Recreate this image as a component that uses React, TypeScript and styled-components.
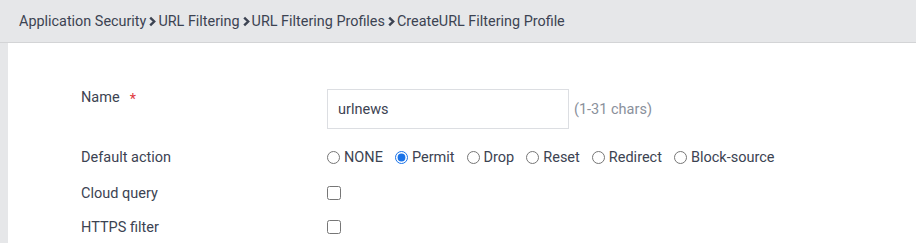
import React from 'react';
import styled, { createGlobalStyle } from 'styled-components';

const GlobalStyle = createGlobalStyle`
  html, body {
    margin: 0;
    padding: 0;
    background: #ffffff;
    font-family: Roboto, "Liberation Sans", sans-serif;
  }
`;

const Page = styled.div`
  width: 916px;
  height: 243px;
  display: flex;
  flex-direction: column;
  overflow: hidden;
`;

const Header = styled.div`
  height: 42px;
  flex-shrink: 0;
  background: #e6e7e9;
  border-bottom: 1px solid #d3d4d6;
  display: flex;
  align-items: center;
  padding-left: 19px;
  font-size: 14.4px;
  color: #3c4352;
`;

const Crumb = styled.span`
  display: inline-flex;
  align-items: center;
`;

const Chevron = styled.svg`
  margin: 0 2px 0 3px;
`;

const Body = styled.div`
  flex: 1;
  display: flex;
`;

const SideStrip = styled.div`
  width: 8px;
  background: #e6e7e9;
`;

const Form = styled.div`
  flex: 1;
  padding: 46px 0 0 73px;
  display: flex;
  flex-direction: column;
`;

const Row = styled.div<{ $h: number }>`
  display: grid;
  grid-template-columns: 246px 1fr;
  align-items: center;
  height: ${(p) => p.$h}px;
`;

const Label = styled.div<{ $top?: boolean }>`
  font-size: 14.5px;
  color: #3c4352;
  align-self: ${(p) => (p.$top ? 'start' : 'center')};
`;

const Star = styled.span`
  color: #e0383e;
  margin-left: 10px;
  font-size: 14.5px;
  position: relative;
  top: 2px;
`;

const Field = styled.div<{ $top?: boolean }>`
  display: flex;
  align-items: center;
  align-self: ${(p) => (p.$top ? 'start' : 'center')};
`;

const Input = styled.input`
  box-sizing: border-box;
  width: 242px;
  height: 40px;
  border: 1px solid #dcdee2;
  padding: 0 10px;
  font-family: inherit;
  font-size: 14.5px;
  color: #3c4352;
  outline: none;
`;

const Hint = styled.span`
  margin-left: 5px;
  font-size: 14.5px;
  color: #8a909b;
`;

const Options = styled.div`
  display: flex;
  align-items: center;
  gap: 12px;
`;

const Option = styled.label`
  display: inline-flex;
  align-items: center;
  font-size: 14.5px;
  color: #3c4352;
`;

const Radio = styled.input`
  margin: 0 4px 0 0;
  width: 13px;
  height: 13px;
  accent-color: #1a73e8;
`;

const Check = styled.input`
  margin: 0;
  width: 14px;
  height: 14px;
`;

const actions = ['NONE', 'Permit', 'Drop', 'Reset', 'Redirect', 'Block-source'];
const crumbs = ['Application Security', 'URL Filtering', 'URL Filtering Profiles', 'CreateURL Filtering Profile'];

export default function App() {
  return (
    <Page>
      <GlobalStyle />
      <Header>
        {crumbs.map((c, i) => (
          <Crumb key={c}>
            {i > 0 && (
              <Chevron width="7" height="11" viewBox="0 0 7 11">
                <path d="M1.2 1.6 L5.2 5.5 L1.2 9.4" fill="none" stroke="#3c4352" strokeWidth="2.4" />
              </Chevron>
            )}
            {c}
          </Crumb>
        ))}
      </Header>
      <Body>
        <SideStrip />
        <Form>
          <Row $h={50}>
            <Label $top>
              Name<Star>*</Star>
            </Label>
            <Field $top>
              <Input defaultValue="urlnews" />
              <Hint>(1-31 chars)</Hint>
            </Field>
          </Row>
          <Row $h={36}>
            <Label>Default action</Label>
            <Options>
              {actions.map((a) => (
                <Option key={a}>
                  <Radio type="radio" name="act" defaultChecked={a === 'Permit'} />
                  {a}
                </Option>
              ))}
            </Options>
          </Row>
          <Row $h={36}>
            <Label>Cloud query</Label>
            <Field>
              <Check type="checkbox" />
            </Field>
          </Row>
          <Row $h={32}>
            <Label>HTTPS filter</Label>
            <Field>
              <Check type="checkbox" />
            </Field>
          </Row>
        </Form>
      </Body>
    </Page>
  );
}
